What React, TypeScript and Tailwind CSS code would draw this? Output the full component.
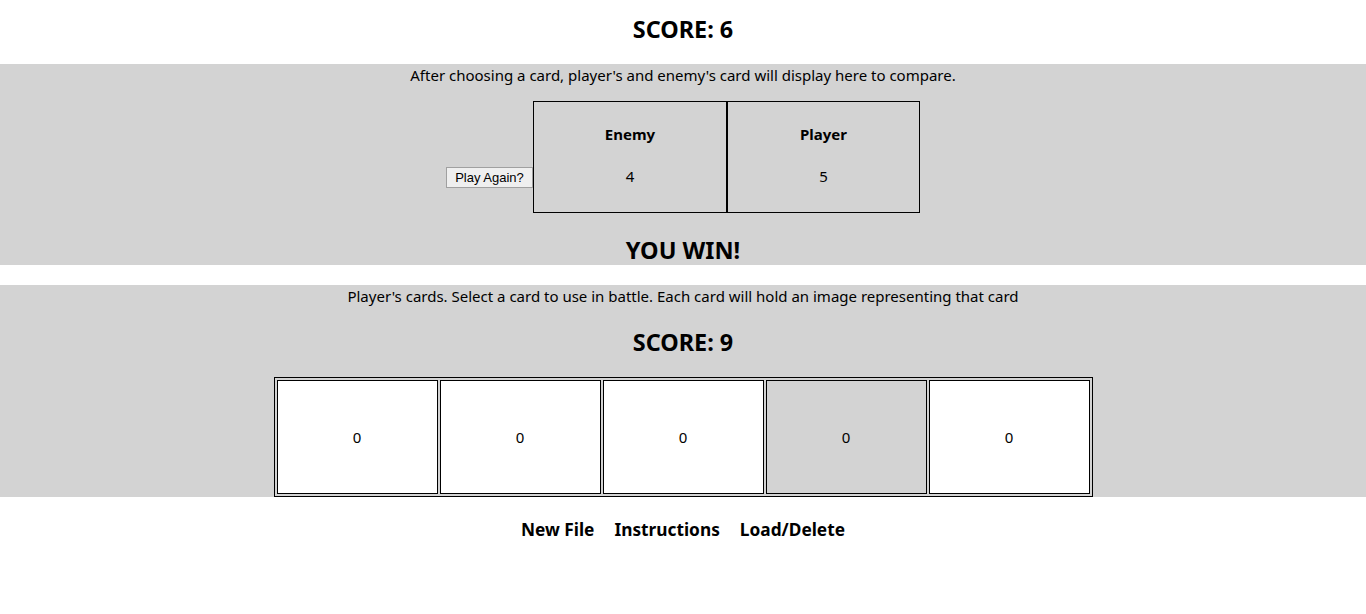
import React from "react";

export default function App() {
  const cards = [0, 0, 0, 0, 0];
  return (
    <div className="w-[1366px] h-[614px] bg-white text-black font-['Noto_Sans',sans-serif]">
      <div className="h-[64px] flex items-center justify-center pb-[5px]">
        <h2 className="text-[23.4px] font-bold leading-none">SCORE: 6</h2>
      </div>
      <div className="bg-[#d3d3d3] h-[201px] flex flex-col items-center overflow-hidden">
        <p className="text-[15px] leading-[22px] h-[22px]">
          After choosing a card, player's and enemy's card will display here to compare.
        </p>
        <div className="mt-[15px] flex items-start">
          <button className="mt-[66px] h-[21px] w-[87px] px-[5px] bg-[#efefef] border border-[#a0a0a0] text-[13px] leading-none font-['Liberation_Sans',sans-serif] text-black">
            Play Again?
          </button>
          <div className="flex">
            <div className="w-[194px] h-[112px] border border-black flex flex-col items-center">
              <div className="mt-[21px] text-[15px] font-bold leading-[22px]">Enemy</div>
              <div className="mt-[20px] text-[15px] leading-[22px]">4</div>
            </div>
            <div className="w-[193px] h-[112px] border border-black flex flex-col items-center">
              <div className="mt-[21px] text-[15px] font-bold leading-[22px]">Player</div>
              <div className="mt-[20px] text-[15px] leading-[22px]">5</div>
            </div>
          </div>
        </div>
        <h2 className="mt-[26px] text-[23.5px] font-bold leading-none">YOU WIN!</h2>
      </div>
      <div className="h-[20px]" />
      <div className="bg-[#d3d3d3] h-[212px] flex flex-col items-center">
        <p className="text-[15px] leading-[22px] h-[22px]">
          Player's cards. Select a card to use in battle. Each card will hold an image representing that card
        </p>
        <h2 className="mt-[24px] text-[23.4px] font-bold leading-none">SCORE: 9</h2>
        <div className="mt-[23px] w-[819px] h-[120px] shrink-0 border border-black p-[2px] flex gap-[2px]">
          {cards.map((c, i) => (
            <div
              key={i}
              className={
                "flex-1 h-full border border-black flex items-center justify-center text-[15px] " +
                (i === 3 ? "bg-[#d3d3d3]" : "bg-white")
              }
            >
              {c}
            </div>
          ))}
        </div>
      </div>
      <nav className="mt-[21px] flex justify-center gap-[20px] text-[17.3px] font-bold leading-[24px]">
        <span>New File</span>
        <span>Instructions</span>
        <span>Load/Delete</span>
      </nav>
    </div>
  );
}
